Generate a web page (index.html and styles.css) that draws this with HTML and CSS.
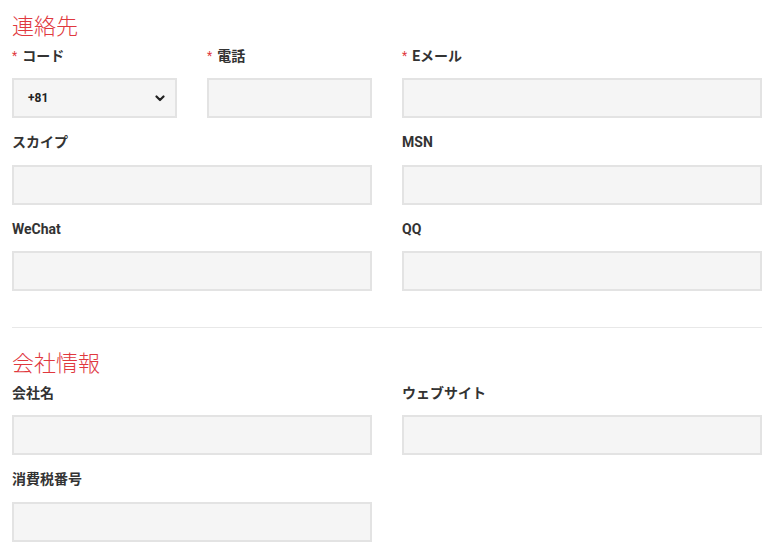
FILE: index.html
```html
<!DOCTYPE html>
<html lang="ja">
<head>
<meta charset="utf-8">
<title>連絡先</title>
<link rel="stylesheet" href="styles.css">
</head>
<body>
<div class="page">
  <section class="section first">
    <h2 class="title">連絡先</h2>
    <div class="grid">
      <div class="group">
        <label class="label"><span class="req">*</span>コード</label>
        <div class="select">
          <span class="select-val">+81</span>
          <svg class="chev" width="10" height="7" viewBox="0 0 10 7"><path d="M1.5 1.5 L5 5 L8.5 1.5" fill="none" stroke="#222" stroke-width="2.2" stroke-linecap="round" stroke-linejoin="round"/></svg>
        </div>
      </div>
      <div class="group">
        <label class="label"><span class="req">*</span>電話</label>
        <div class="input"></div>
      </div>
      <div class="group">
        <label class="label"><span class="req">*</span>Eメール</label>
        <div class="input"></div>
      </div>
      <div class="group span2">
        <label class="label">スカイプ</label>
        <div class="input"></div>
      </div>
      <div class="group">
        <label class="label">MSN</label>
        <div class="input"></div>
      </div>
      <div class="group span2">
        <label class="label">WeChat</label>
        <div class="input"></div>
      </div>
      <div class="group">
        <label class="label">QQ</label>
        <div class="input"></div>
      </div>
    </div>
  </section>
  <hr class="divider">
  <section class="section">
    <h2 class="title">会社情報</h2>
    <div class="grid">
      <div class="group span2">
        <label class="label">会社名</label>
        <div class="input"></div>
      </div>
      <div class="group">
        <label class="label">ウェブサイト</label>
        <div class="input"></div>
      </div>
      <div class="group span2">
        <label class="label">消費税番号</label>
        <div class="input"></div>
      </div>
    </div>
  </section>
</div>
</body>
</html>
```

FILE: styles.css
```css
* { box-sizing: border-box; }
html, body { margin: 0; padding: 0; background: #fff; }
body {
  font-family: Roboto, "Noto Sans CJK JP", "Liberation Sans", sans-serif;
  color: #333;
}
.page {
  width: 750px;
  margin-left: 12px;
  padding-top: 9px;
}
.title {
  margin: 0 0 7.5px 0;
  font-size: 22px;
  line-height: 30px;
  font-weight: 300;
  color: #e0383e;
  font-family: "Noto Sans CJK JP", Roboto, sans-serif;
}
.grid {
  display: grid;
  grid-template-columns: 165px 165px 360px;
  column-gap: 30px;
}
.span2 { grid-column: 1 / span 2; }
.group { margin-bottom: 15px; }
.label {
  display: block;
  font-size: 14px;
  line-height: 19.5px;
  font-weight: 700;
  color: #333;
  margin-bottom: 12px;
}
.req {
  color: #e0383e;
  font-weight: 400;
  font-size: 12px;
  margin-right: 5px;
  vertical-align: 1px;
}
.input, .select {
  height: 40px;
  background: #f5f5f5;
  border: 2px solid #e3e3e3;
}
.select {
  display: flex;
  align-items: center;
  justify-content: space-between;
  padding: 0 10px 0 14px;
}
.select-val {
  font-size: 12px;
  font-weight: 700;
  color: #222;
}
.chev { display: block; }
.divider {
  margin: 21px 0 18px 0;
  border: 0;
  border-top: 1px solid #e8e8e8;
  height: 0;
}
```
